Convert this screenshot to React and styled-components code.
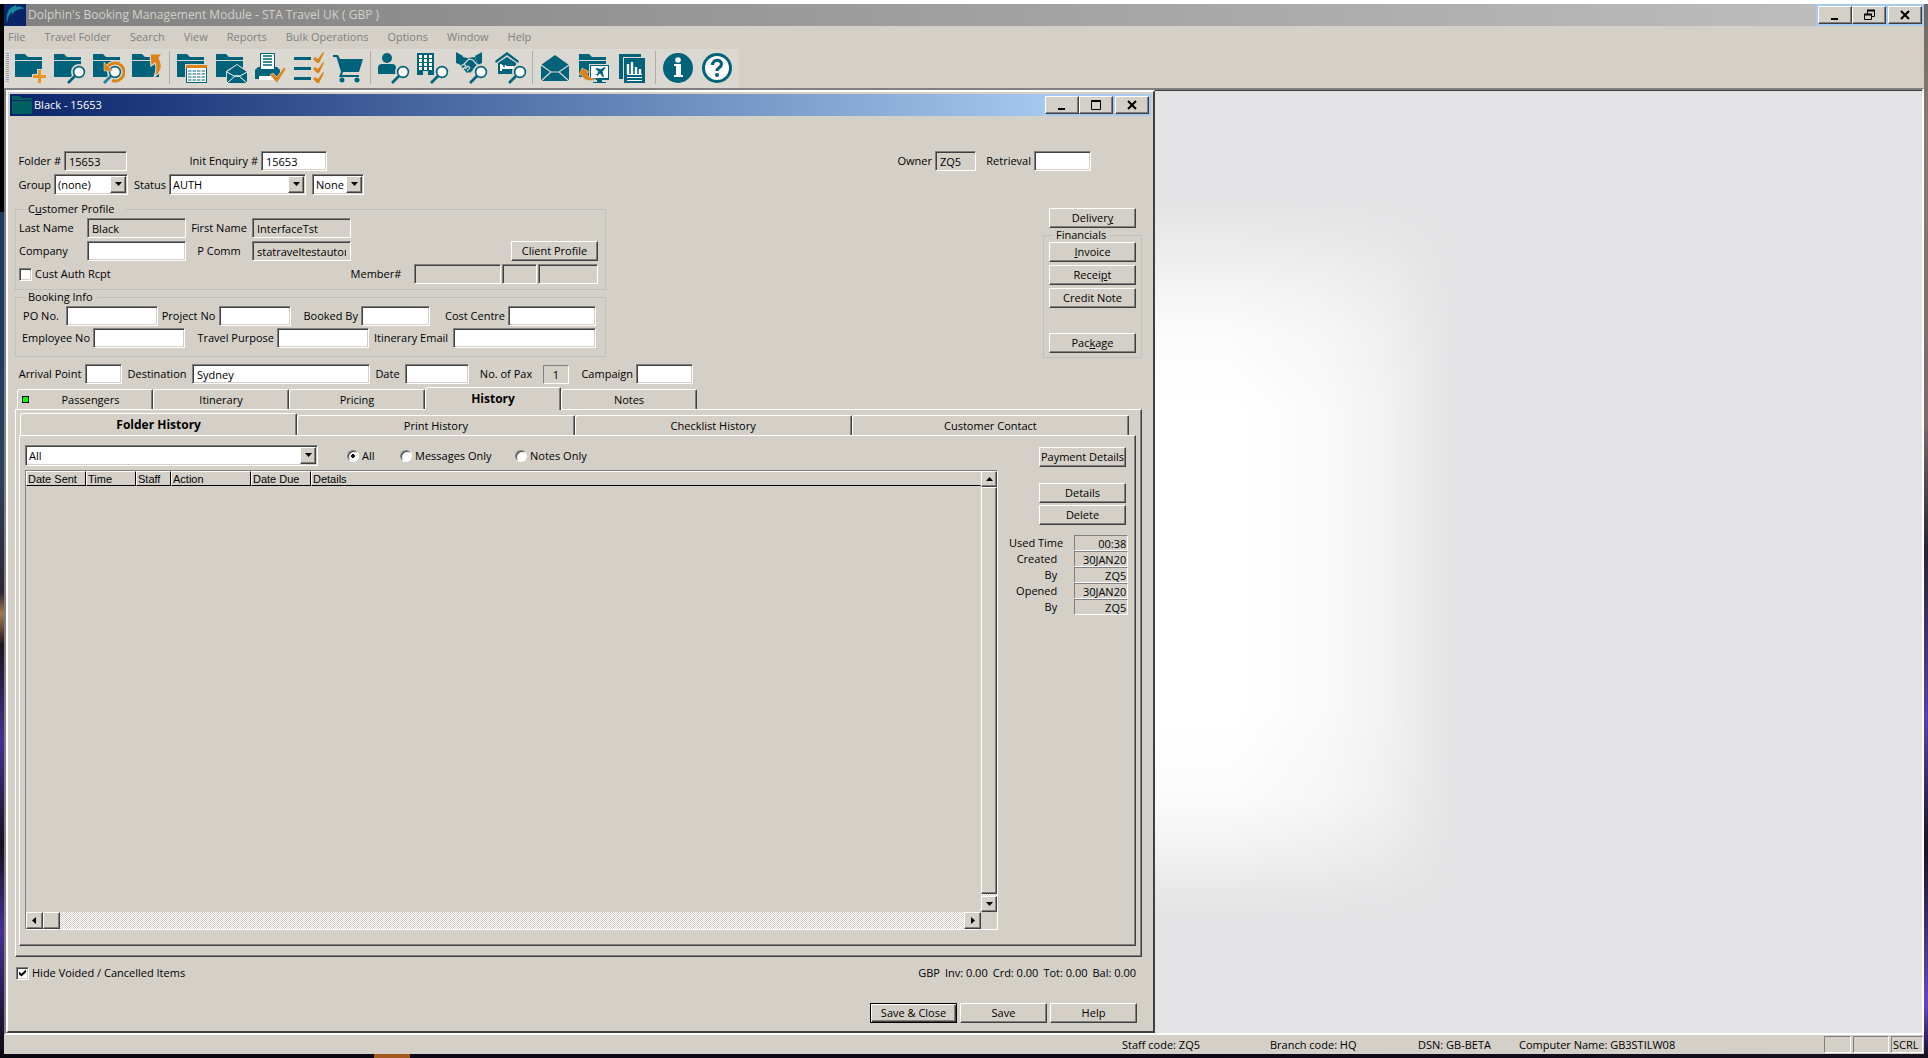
import React, { useState } from "react";
import styled, { createGlobalStyle, css } from "styled-components";

const FACE = "#d4d0c8";
const DARK = "#404040";
const SHADE = "#808080";
const TEAL = "#00637a";
const ORANGE = "#dc8318";
const LIGHT = "#dbd8d1";

const raised = css`
  border: 1px solid;
  border-color: #fff ${DARK} ${DARK} #fff;
  box-shadow: inset -1px -1px 0 ${SHADE};
`;

const sunken = css`
  border: 1px solid;
  border-color: ${SHADE} #fff #fff ${SHADE};
  box-shadow: inset 1px 1px 0 ${DARK}, inset -1px -1px 0 ${FACE};
`;

const GlobalStyle = createGlobalStyle`
  * { box-sizing: border-box; }
  body { margin: 0; background: #000; }
  body, button, input, select {
    font-family: "Open Sans", "Noto Sans", sans-serif;
    font-size: 11px;
    line-height: 14px;
    color: #000;
  }
`;

const Desktop = styled.div`
  height: 100vh;
  display: flex;
  padding: 0 4px 4px;
  background:
    linear-gradient(#fff, #fff) top / 100% 4px no-repeat,
    linear-gradient(90deg, #0a0810 0 374px, #a55a20 374px 410px, #0c0914 410px 60%, #14101e) bottom / 100% 4px no-repeat,
    linear-gradient(#000 0 20%, #1e3c60 20% 33%, #2d3f5c 45%, #2d2438 56%, #a07a50 58%, #1c1220 61%, #472f91 70%, #15101f 80%, #4a2e94 88%, #0c0914) left / 4px 100% no-repeat,
    linear-gradient(#6b6764, #8d7a6e 12%, #7c6a66 40%, #2b2236 52%, #5b3fb0 68%, #1a1424 80%, #6846c8 95%, #120c20) right / 4px 100% no-repeat;
`;

const AppWindow = styled.div`
  flex: 1;
  min-width: 0;
  margin-top: 4px;
  display: flex;
  flex-direction: column;
  background: ${FACE};
`;

const TitleBar = styled.header`
  flex: none;
  height: 22px;
  display: flex;
  align-items: center;
  color: ${(p) => (p.$active ? "#fff" : FACE)};
  background: ${(p) =>
    p.$active
      ? "linear-gradient(90deg, #0a246a, #a6caf0 92%)"
      : "linear-gradient(90deg, #808080, #c0c0c0)"};
`;

const TitleText = styled.h1`
  flex: 1;
  margin: 0;
  padding-left: 2px;
  font-size: ${(p) => (p.$large ? "12px" : "11px")};
  font-weight: 400;
  line-height: 22px;
  white-space: nowrap;
`;

const Controls = styled.div`
  height: 22px;
  display: flex;
  align-items: center;
  padding: 0 2px;
  background: #a6caf0;
`;

const ControlButton = styled.button`
  ${raised}
  width: 34px;
  height: 18px;
  padding: 0;
  display: grid;
  place-items: center;
  background: ${FACE};
  &:last-child { margin-left: 2px; }
`;

const MenuBar = styled.nav`
  flex: none;
  height: 23px;
  display: flex;
  align-items: center;
  gap: 1px;
  padding-bottom: 1px;
`;

const MenuItem = styled.button`
  border: 0;
  background: none;
  padding: 0 9px;
  color: ${SHADE};
  white-space: nowrap;
  &:first-child { padding-left: 4px; }
`;

const ToolBar = styled.div`
  flex: none;
  width: 735px;
  height: 39px;
  display: flex;
  align-items: center;
  padding: 0 0 2px 2px;
  background: ${LIGHT};
`;

const Grip = styled.div`
  width: 3px;
  height: 30px;
  margin-right: 4px;
  background: repeating-linear-gradient(#9a9cb4 0 1px, ${LIGHT} 1px 2px);
`;

const ToolButton = styled.button`
  width: 39px;
  height: 34px;
  padding: 0 0 0 2px;
  border: 0;
  background: none;
  display: flex;
  align-items: center;
  justify-content: flex-start;
`;

const Separator = styled.div`
  width: 1px;
  height: 33px;
  margin-right: 5px;
  background: #b0aca4;
`;

const Workspace = styled.main`
  flex: 1;
  min-height: 0;
  display: flex;
  border: solid;
  border-width: 2px;
  border-color: ${SHADE} #fff #fff ${SHADE};
  box-shadow: inset 0 1px 0 ${DARK};
  background: #e3e3e5;
  overflow: hidden;
`;

const Glow = styled.div`
  flex: 1;
  background: #fff;
  mask-image:
    linear-gradient(90deg, #000 80px, rgba(0, 0, 0, 0.8) 170px, rgba(0, 0, 0, 0.55) 230px, rgba(0, 0, 0, 0.25) 270px, transparent 305px),
    linear-gradient(transparent 105px, rgba(0, 0, 0, 0.25) 145px, rgba(0, 0, 0, 0.6) 195px, rgba(0, 0, 0, 0.85) 245px, #000 320px, #000 620px, rgba(0, 0, 0, 0.85) 710px, rgba(0, 0, 0, 0.5) 765px, rgba(0, 0, 0, 0.2) 800px, transparent 835px);
  mask-composite: intersect;
`;

const FolderWindow = styled.section`
  flex: 0 1 1149px;
  display: flex;
  flex-direction: column;
  padding: 2px;
  border: 2px solid;
  border-color: #fff ${DARK} ${DARK} #fff;
  background: ${FACE};
`;

const Body = styled.form`
  flex: 1;
  min-height: 0;
  display: flex;
  flex-direction: column;
  padding: 35px 9px 6px 5px;
`;

const Upper = styled.div`
  display: flex;
  justify-content: space-between;
`;

const LeftColumn = styled.div`
  width: 591px;
`;

const RightColumn = styled.div`
  width: 246px;
  display: flex;
  flex-direction: column;
  align-items: flex-end;
`;

const Row = styled.div`
  display: grid;
  grid-template-columns: ${(p) => p.$cols};
  align-items: center;
  width: 100%;
  min-height: 20px;
  margin-bottom: ${(p) => p.$after || "0"};
`;

const Label = styled.label`
  text-align: ${(p) => p.$align || "center"};
  padding: ${(p) => (p.$align === "right" ? "0 3px 0 0" : p.$align === "left" ? "0 0 0 3px" : "0")};
  white-space: nowrap;
`;

const Field = styled.input`
  ${sunken}
  width: 100%;
  min-width: 0;
  height: 20px;
  padding: 0 4px;
  border-radius: 0;
  outline: 0;
  background: ${(p) => (p.readOnly ? FACE : "#fff")};
`;

const FlatField = styled.input`
  width: 100%;
  min-width: 0;
  height: ${(p) => (p.$tall ? "19px" : "16px")};
  padding: 0 1px;
  border: 1px solid;
  border-color: ${SHADE} #fff #fff ${SHADE};
  outline: 0;
  background: ${FACE};
  text-align: ${(p) => (p.$tall ? "center" : "right")};
`;

const SelectBox = styled.span`
  ${sunken}
  position: relative;
  display: block;
  width: ${(p) => p.$width || "100%"};
  height: 21px;
  padding: 2px;
  background: #fff;
`;

const NativeSelect = styled.select`
  appearance: none;
  display: block;
  width: 100%;
  height: 15px;
  padding: 0 0 0 1px;
  border: 0;
  outline: 0;
  background: transparent;
`;

const Arrow = styled.span`
  ${raised}
  position: absolute;
  top: 1px;
  right: 1px;
  width: 16px;
  height: 17px;
  display: grid;
  place-items: center;
  background: ${FACE};
  pointer-events: none;
`;

const Group = styled.fieldset`
  margin: 0;
  min-width: 0;
  width: ${(p) => p.$width || "auto"};
  border: 1px solid #bfbfbf;
  padding: ${(p) => p.$pad};
`;

const Legend = styled.legend`
  margin-left: ${(p) => (p.$near ? "5px" : "10px")};
  padding: 0 ${(p) => (p.$wide ? "12px" : "4px")} 0 2px;
  height: 14px;
`;

const PushButton = styled.button`
  ${raised}
  width: 87px;
  height: 20px;
  padding: 0;
  background: ${FACE};
  text-align: center;
  white-space: nowrap;
  ${(p) =>
    p.$default &&
    css`
      border-color: #000;
      box-shadow: inset 1px 1px 0 #fff, inset -1px -1px 0 ${DARK}, inset -2px -2px 0 ${SHADE};
    `}
`;

const ButtonStack = styled.div`
  display: flex;
  flex-direction: column;
  gap: 3px;
  padding-right: ${(p) => p.$inset || "0"};
`;

const Gap = styled.div`
  height: ${(p) => p.$size};
`;

const CheckLine = styled.label`
  display: flex;
  align-items: center;
  gap: 3px;
  padding-left: ${(p) => p.$indent || "0"};
  white-space: nowrap;
`;

const CheckBox = styled.input`
  ${sunken}
  appearance: none;
  flex: none;
  width: 13px;
  height: 13px;
  margin: 0;
  background: #fff;
  &:checked::before {
    content: "";
    display: block;
    width: 7px;
    height: 7px;
    margin: 2px;
    background: #000;
    clip-path: polygon(0 30%, 35% 60%, 100% 0, 100% 40%, 35% 100%, 0 70%);
  }
`;

const Radio = styled.input`
  appearance: none;
  flex: none;
  width: 12px;
  height: 12px;
  margin: 0;
  border: 1px solid;
  border-color: ${SHADE} #fff #fff ${SHADE};
  border-radius: 50%;
  background: #fff;
  box-shadow: inset 1px 1px 0 ${DARK};
  &:checked {
    background: radial-gradient(circle, #000 0 2px, #fff 2px);
  }
`;

const TabList = styled.div`
  flex: none;
  display: flex;
  align-items: flex-end;
  height: 22px;
  padding: ${(p) => p.$pad || "0"};
  position: relative;
  z-index: 1;
`;

const Tab = styled.button`
  flex: ${(p) => (p.$fill ? "1 1 0" : "none")};
  width: ${(p) => (p.$fill ? "auto" : "136px")};
  height: 20px;
  padding: 0;
  display: flex;
  align-items: center;
  border: solid;
  border-width: 1px 1px 0 1px;
  border-color: #fff ${DARK} #fff #fff;
  border-radius: 3px 2px 0 0;
  box-shadow: inset -1px 0 0 ${SHADE};
  background: ${FACE};
  ${(p) =>
    p["aria-selected"] &&
    css`
      height: ${p.$fill ? "22px" : "23px"};
      margin-bottom: ${p.$fill ? "0" : "-1px"};
      font-weight: 700;
      font-size: 12px;
    `}
`;

const TabText = styled.span`
  flex: 1;
  text-align: center;
`;

const Marker = styled.span`
  width: 7px;
  height: 7px;
  margin-left: 4px;
  border: 1px solid #000;
  background: #0f0;
`;

const Panel = styled.div`
  flex: 1;
  min-height: 0;
  display: flex;
  flex-direction: column;
  border: 1px solid;
  border-color: #fff ${DARK} ${DARK} #fff;
  box-shadow: inset -1px -1px 0 ${SHADE};
  padding: ${(p) => p.$pad};
`;

const HistoryLayout = styled.div`
  flex: 1;
  min-height: 0;
  display: grid;
  grid-template-columns: 1fr 117px;
  gap: 11px;
`;

const HistoryMain = styled.div`
  display: flex;
  flex-direction: column;
  gap: 4px;
  min-height: 0;
`;

const Filters = styled.div`
  display: grid;
  grid-template-columns: 322px 53px 115px auto;
  align-items: center;
`;

const ListView = styled.div`
  flex: 1;
  min-height: 0;
  display: grid;
  grid-template-columns: 1fr 16px;
  grid-template-rows: 1fr 17px;
  border: 1px solid;
  border-color: ${SHADE} #fff #fff ${SHADE};
`;

const Table = styled.table`
  width: 100%;
  table-layout: fixed;
  border-collapse: separate;
  border-spacing: 0;
  align-self: start;
`;

const Th = styled.th`
  width: ${(p) => p.$width};
  height: 15px;
  padding: 0 0 0 1px;
  border: 1px solid;
  border-color: #fff ${(p) => (p.$width ? "#000" : FACE)} #000 #fff;
  font: 11px/12px "Liberation Sans", Arial, sans-serif;
  text-align: left;
`;

const ScrollBar = styled.div`
  display: flex;
  flex-direction: ${(p) => (p.$vertical ? "column" : "row")};
  background: repeating-conic-gradient(#fff 0 25%, ${FACE} 0 50%) 0 0 / 2px 2px;
`;

const ScrollButton = styled.button`
  ${raised}
  flex: none;
  width: ${(p) => (p.$vertical ? "16px" : "17px")};
  height: ${(p) => (p.$vertical ? "16px" : "17px")};
  padding: 0;
  display: grid;
  place-items: center;
  background: ${FACE};
`;

const Thumb = styled.div`
  ${raised}
  flex: ${(p) => (p.$vertical ? "1" : "0 0 17px")};
  margin-bottom: ${(p) => (p.$vertical ? "2px" : "0")};
  background: ${FACE};
`;

const Spring = styled.div`
  flex: 1;
`;

const Side = styled.aside`
  display: flex;
  flex-direction: column;
  align-items: flex-end;
  padding-top: 2px;
`;

const Facts = styled.div`
  width: 100%;
  display: grid;
  grid-template-columns: 1fr 54px;
`;

const FactLabel = styled.label`
  text-align: right;
  padding-right: ${(p) => (p.$wide ? "11px" : "17px")};
  line-height: 16px;
  white-space: nowrap;
`;

const Footer = styled.footer`
  flex: none;
  display: flex;
  justify-content: space-between;
  padding: 9px 6px 23px 1px;
`;

const Totals = styled.div`
  display: flex;
  gap: 5px;
`;

const Actions = styled.div`
  flex: none;
  display: flex;
  justify-content: flex-end;
  gap: 3px;
  padding-right: 5px;
`;

const StatusBar = styled.footer`
  flex: none;
  height: 19px;
  display: grid;
  grid-template-columns: 1fr 148px 148px 101px 303px 29px 38px 34px;
  align-items: center;
  padding: 1px 1px 1px 0;
  white-space: nowrap;
`;

const StatusCell = styled.span`
  grid-column: ${(p) => p.$col || "auto"};
`;

const StatusBox = styled.span`
  height: 17px;
  margin-left: 2px;
  padding-left: 1px;
  border: 1px solid;
  border-color: ${SHADE} #fff #fff ${SHADE};
  line-height: 15px;
`;

/* ---------- icons ---------- */

const Svg = ({ children }) => (
  <svg width="32" height="32" viewBox="0 0 32 32" fill={TEAL} aria-hidden="true">{children}</svg>
);
const FolderShape = () => <path d="M0 2h10l3 3h14v3H0zM0 9h27v16H0z" />;
const Lens = ({ x = 25, y = 20, handle = TEAL }) => (
  <g transform={`translate(${x - 25} ${y - 20})`} fill="none">
    <path d="M21 24l-7 7" stroke={LIGHT} strokeWidth="5" />
    <circle cx="25" cy="20" r="6" stroke={LIGHT} strokeWidth="4" />
    <path d="M21 24l-7 7" stroke={handle} strokeWidth="2.6" />
    <circle cx="25" cy="20" r="5.4" fill="#fff" stroke={TEAL} strokeWidth="1.6" />
  </g>
);

const icons = {
  newFolder: <Svg><FolderShape /><path d="M22 17h5v5h5v5h-5v5h-5v-5h-5v-5h5z" fill={LIGHT} /><path d="M23 18h3v5h5v3h-5v5h-3v-5h-5v-3h5z" fill="#e6951f" /></Svg>,
  findFolder: <Svg><FolderShape /><Lens /></Svg>,
  refreshFolder: (
    <Svg><FolderShape /><Lens x={22} handle="#1a7fa0" />
      <path d="M14 16A9 9 0 1 1 19 28.500" fill="none" stroke={LIGHT} strokeWidth="5" />
      <path d="M14 16A9 9 0 1 1 19 28.500" fill="none" stroke={ORANGE} strokeWidth="3" />
      <path d="M11 10v9h9z" fill={ORANGE} stroke={LIGHT} strokeWidth=".6" />
    </Svg>
  ),
  moveFolder: (
    <Svg><FolderShape />
      <path d="M18 2h12l-3 4c4 7 3 14-5 19 2-5 3-9 1-14l-4 3z" fill={ORANGE} stroke={LIGHT} strokeWidth="1.200" />
    </Svg>
  ),
  folderTable: (
    <Svg><FolderShape /><path d="M8 12h23v20H8z" fill={LIGHT} /><path d="M9 15h21v16H9z" /><path d="M10 16h19v14H10z" fill="#fff" />
      <path d="M9 13h21v3H9z" fill={ORANGE} />
      <path d="M11 19h17M11 22h17M11 25h17M11 28h17" stroke={TEAL} strokeWidth="1.200" strokeDasharray="3.500 1" />
    </Svg>
  ),
  folderMail: (
    <Svg><FolderShape /><path d="M10 19l11-7 11 7v13H10z" fill={LIGHT} /><path d="M11 20l10-7 10 7v11H11z" />
      <path d="M11 20l7 4h6l7-4M11 31l8-7h4l8 7" fill="none" stroke="#fff" strokeWidth="1" />
    </Svg>
  ),
  print: (
    <Svg><path d="M0 18l3-3h19l3 3v9H0z" /><path d="M5 1h15v17H5z" /><path d="M6 2h13v15H6z" fill="#fff" />
      <path d="M8 4h9M8 7h9M8 10h9M8 13h9" stroke={TEAL} strokeWidth="1.300" /><path d="M4 24h14v4H4z" fill="#fff" />
      <path d="M15 23l3-2 4 4 7-10 2 2-9 14z" fill={ORANGE} stroke={LIGHT} strokeWidth=".7" />
    </Svg>
  ),
  checklist: (
    <Svg><path d="M0 5h17v3H0zM0 15h17v3H0zM0 25h17v3H0z" />
      {[0, 10, 20].map((y) => <path key={y} transform={`translate(0 ${y})`} d="M19 7l2-2 3 2 5-7 1 1-5 10h-2z" fill={ORANGE} />)}
    </Svg>
  ),
  cart: <Svg><path d="M0 3h5l2 4h23l-4 13H10l-1 3h17v2H6l2-5L3.500 5H0z" /><circle cx="9" cy="28" r="2.500" /><circle cx="24" cy="28" r="2.500" /></Svg>,
  person: <Svg><circle cx="9" cy="6" r="5" /><path d="M0 22v-6q0-4 4-4h10q4 0 4 4v6z" /><Lens /></Svg>,
  building: (
    <Svg><path d="M0 1h17v22h-6v-4H6v4H0z" />
      {[3, 7, 11, 15].map((y) => [2, 7, 12].map((x) => <rect key={`${x}-${y}`} x={x} y={y} width="3" height="3" fill="#fff" />))}
      <Lens />
    </Svg>
  ),
  handshake: (
    <Svg><path d="M0 0l7 4-2 9-5-2zM26 0l-7 4 3 9 4-2z" /><path d="M6 5l6 1 7-1 3 8-7 6-4 2-7-8z" />
      <path d="M8 12l5-5 4 1 6 7M5 14l3-2 2 2-3 3M9 17l3-3 2 2-3 3" fill="none" stroke={LIGHT} strokeWidth="1.200" />
      <path d="M12 19l3-3 2 2-3 3z" /><Lens />
    </Svg>
  ),
  hotel: (
    <Svg><path d="M0 9L12 0l12 9-1 2L12 3 1 11z" /><path d="M3 11l9-6 9 6v11H3z" /><path d="M5 12v7h2v-2h11v2h1v-5h-8v-1H7v-1z" fill="#fff" /><circle cx="9" cy="14" r="1" fill={TEAL} /><Lens /></Svg>
  ),
  mail: <Svg><path d="M1 13L15 3l14 10v16H1z" /><path d="M1 13l10 7h8l10-7M1 29l10-9m8 0l10 9" fill="none" stroke={LIGHT} strokeWidth="1.200" /></Svg>,
  travel: (
    <Svg><FolderShape /><path d="M10 12h21v16H10z" fill={LIGHT} /><path d="M11 13h19v15H11zM18 28h5v2h4v1H14v-1h4z" /><path d="M12 14h17v12H12z" fill="#fff" />
      <path d="M25.500 15l1 1-3 3.500 1.500 5-1 .8-3-3.800-2 1.500v2l-1-2-2-1h2l1.500-2.500-3-2.500 1-1 4.500 1.200z" />
      <path d="M0 23l3-7 8 4-3 1c1 4 5 6 9 6-5 3-13 2-14-4z" fill={ORANGE} stroke={LIGHT} strokeWidth=".5" />
    </Svg>
  ),
  report: (
    <Svg><path d="M1 2h22v3H5v22H1z" /><path d="M6 6h21v25H6z" /><path d="M10 12v10M14 10v12M18 15v7M22 17v5" stroke="#fff" strokeWidth="2.400" fill="none" /><path d="M9 22.500h15M9 25.500h15M9 28.500h15" stroke="#fff" strokeWidth="1.200" /></Svg>
  ),
  info: <Svg><circle cx="15" cy="16" r="15" /><circle cx="15" cy="8" r="2.800" fill="#fff" /><path d="M11 12h7v11h2v2h-9v-2h2v-9h-2z" fill="#fff" /></Svg>,
  help: (
    <Svg><circle cx="15" cy="16" r="15" /><circle cx="15" cy="16" r="12" fill="#fff" />
      <path d="M10.500 13c0-6 9-6 9-1 0 4-4.500 3.500-4.500 7" fill="none" stroke={TEAL} strokeWidth="3.200" /><circle cx="15" cy="23" r="2" />
    </Svg>
  ),
};

const toolGroups = [
  [["New folder", "newFolder"], ["Find folder", "findFolder"], ["Recent folders", "refreshFolder"], ["Move folder", "moveFolder"]],
  [["Folder list", "folderTable"], ["Folder mail", "folderMail"], ["Print", "print"], ["Checklist", "checklist"], ["Cart", "cart"]],
  [["Find client", "person"], ["Find company", "building"], ["Find supplier", "handshake"], ["Find hotel", "hotel"]],
  [["Mail", "mail"], ["Import booking", "travel"], ["Reports", "report"]],
  [["Information", "info"], ["Help", "help"]],
];

const Dolphin = () => (
  <svg width="22" height="22" viewBox="0 0 22 22" aria-hidden="true">
    <path d="M0 0h22v22H0z" fill="#0a246a" />
    <path d="M3 20C2 12 3 6 8 3l4-2v2c4-1 7 0 8 2-4-1-7 1-10 3l-2 3v-3c-3 2-4 6-5 12z" fill="#138a9c" />
  </svg>
);

const SmallFolder = () => (
  <svg width="22" height="22" viewBox="0 0 22 22" fill="#006060" aria-hidden="true">
    <path d="M2 2h8l2 2h10v2H2zM2 7h20v13H2z" />
  </svg>
);

const Triangle = ({ dir = "down" }) => {
  const points = { down: "0,1 7,1 3.5,5", up: "0,5 7,5 3.5,1", left: "5,0 5,7 1,3.5", right: "2,0 2,7 6,3.5" };
  return <svg width="7" height="7" viewBox="0 0 7 7" aria-hidden="true"><polygon points={points[dir]} /></svg>;
};

const Glyph = ({ kind }) => (
  <svg width="14" height="12" viewBox="0 0 14 12" fill="none" stroke="#000" aria-hidden="true">
    {kind === "Minimize" && <path d="M3 10h7" strokeWidth="2" />}
    {kind === "Maximize" && <><path d="M2 2h10" strokeWidth="2" /><path d="M2.500 2v8.500h9V2" /></>}
    {kind === "Restore" && <><path d="M5 1.500h8M2 5.500h8" strokeWidth="2" /><path d="M5.500 2v3M12.500 2v5.500H10M2.500 5v5.500h7V5" /></>}
    {kind === "Close" && <path d="M3 2l8 8M11 2l-8 8" strokeWidth="2" />}
  </svg>
);

const WindowControls = ({ middle }) => (
  <Controls>
    {["Minimize", middle, "Close"].map((k) => (
      <ControlButton key={k} type="button" aria-label={k}><Glyph kind={k} /></ControlButton>
    ))}
  </Controls>
);

/* ---------- form helpers ---------- */

const Labelled = ({ id, label, align, value = "", locked }) => (
  <>
    <Label htmlFor={id} $align={align}>{label}</Label>
    <Field id={id} defaultValue={value} readOnly={locked} />
  </>
);

const Dropdown = ({ id, value, width, title }) => (
  <SelectBox $width={width}>
    <NativeSelect id={id} aria-label={title} defaultValue={value}><option>{value}</option></NativeSelect>
    <Arrow><Triangle /></Arrow>
  </SelectBox>
);

const menus = ["File", "Travel Folder", "Search", "View", "Reports", "Bulk Operations", "Options", "Window", "Help"];
const tabs = ["Passengers", "Itinerary", "Pricing", "History", "Notes"];
const historyTabs = ["Folder History", "Print History", "Checklist History", "Customer Contact"];
const columns = [["Date Sent", "60px"], ["Time", "50px"], ["Staff", "35px"], ["Action", "80px"], ["Date Due", "60px"], ["Details"]];
const facts = [["Used Time", "00:38"], ["Created", "30JAN20"], ["By", "ZQ5"], ["Opened", "30JAN20"], ["By", "ZQ5"]];

export default function App() {
  const [tab, setTab] = useState("History");
  const [subTab, setSubTab] = useState("Folder History");

  return (
    <Desktop>
      <GlobalStyle />
      <AppWindow>
        <TitleBar>
          <Dolphin />
          <TitleText $large>Dolphin's Booking Management Module - STA Travel UK ( GBP )</TitleText>
          <WindowControls middle="Restore" />
        </TitleBar>
        <MenuBar>
          {menus.map((m) => (
            <MenuItem key={m} type="button">{m}</MenuItem>
          ))}
        </MenuBar>
        <ToolBar role="toolbar">
          <Grip />
          {toolGroups.map((group, i) => (
            <React.Fragment key={i}>
              {i > 0 && <Separator />}
              {group.map(([name, icon]) => (
                <ToolButton key={name} type="button" aria-label={name}>{icons[icon]}</ToolButton>
              ))}
            </React.Fragment>
          ))}
        </ToolBar>

        <Workspace>
          <FolderWindow>
            <TitleBar $active>
              <SmallFolder />
              <TitleText>Black - 15653</TitleText>
              <WindowControls middle="Maximize" />
            </TitleBar>
            <Body onSubmit={(e) => e.preventDefault()}>
              <Upper>
                <LeftColumn>
                  <Row $cols="49px 63px 134px 66px" $after="3px">
                    <Labelled id="folder" label="Folder #" align="right" value="15653" locked />
                    <Labelled id="enquiry" label="Init Enquiry #" align="right" value="15653" />
                  </Row>
                  <Row $cols="39px 74px 41px 137px 6px 52px" $after="7px">
                    <Label htmlFor="group" $align="right">Group</Label>
                    <Dropdown id="group" value="(none)" />
                    <Label htmlFor="status" $align="right">Status</Label>
                    <Dropdown id="status" value="AUTH" />
                    <span />
                    <Dropdown id="substatus" value="None" title="Secondary status" />
                  </Row>

                  <Group $pad="2px 7px 5px 0">
                    <Legend $wide>C<u>u</u>stomer Profile</Legend>
                    <Row $cols="71px 99px 66px 99px" $after="3px">
                      <Labelled id="last" label="Last Name" align="left" value="Black" locked />
                      <Labelled id="first" label="First Name" value="InterfaceTst" locked />
                    </Row>
                    <Row $cols="71px 99px 66px 99px 1fr 87px" $after="3px">
                      <Labelled id="company" label="Company" align="left" />
                      <Labelled id="pcomm" label="P Comm" value="statraveltestautomation" locked />
                      <span />
                      <PushButton type="button">Client Profile</PushButton>
                    </Row>
                    <Row $cols="1fr 76px 87px 1px 35px 1px 60px">
                      <CheckLine $indent="3px"><CheckBox type="checkbox" />Cust Auth Rcpt</CheckLine>
                      <Labelled id="member" label="Member#" locked />
                      <span />
                      <Field readOnly aria-label="Member type" />
                      <span />
                      <Field readOnly aria-label="Member level" />
                    </Row>
                  </Group>

                  <Group $pad="2px 9px 8px 0">
                    <Legend>Booking Info</Legend>
                    <Row $cols="50px 92px 61px 72px 70px 69px 78px 88px" $after="2px">
                      <Labelled id="po" label="PO No." />
                      <Labelled id="project" label="Project No" />
                      <Labelled id="booked" label="Booked By" align="right" />
                      <Labelled id="cost" label="Cost Centre" align="right" />
                    </Row>
                    <Row $cols="77px 92px 92px 92px 84px 143px">
                      <Labelled id="employee" label="Employee No" align="right" />
                      <Labelled id="purpose" label="Travel Purpose" align="right" />
                      <Labelled id="email" label="Itinerary Email" />
                    </Row>
                  </Group>
                </LeftColumn>

                <RightColumn>
                  <Row $cols="39px 41px 58px 57px" $after="37px">
                    <Labelled id="owner" label="Owner" align="right" value="ZQ5" locked />
                    <Labelled id="retrieval" label="Retrieval" align="right" />
                  </Row>
                  <ButtonStack $inset="6px">
                    <PushButton type="button">Deliver<u>y</u></PushButton>
                  </ButtonStack>
                  <Group $width="99px" $pad="0 5px 4px">
                    <Legend $near>Financials</Legend>
                    <ButtonStack>
                      <PushButton type="button"><u>I</u>nvoice</PushButton>
                      <PushButton type="button">Recei<u>p</u>t</PushButton>
                      <PushButton type="button">Credit Note</PushButton>
                      <Gap $size="19px" />
                      <PushButton type="button">Pac<u>k</u>age</PushButton>
                    </ButtonStack>
                  </Group>
                </RightColumn>
              </Upper>

              <Gap $size="6px" />
              <Row $cols="70px 37px 70px 178px 35px 64px 74px 26px 67px 57px" $after="3px">
                <Labelled id="arrival" label="Arrival Point" />
                <Labelled id="destination" label="Destination" value="Sydney" />
                <Labelled id="date" label="Date" />
                <Label htmlFor="pax">No. of Pax</Label>
                <FlatField id="pax" readOnly $tall defaultValue="1" />
                <Labelled id="campaign" label="Campaign" align="right" />
              </Row>

              <TabList role="tablist" $pad="0 0 0 2px">
                {tabs.map((t) => (
                  <Tab key={t} type="button" role="tab" aria-selected={tab === t} onClick={() => setTab(t)}>
                    {t === "Passengers" && <Marker />}
                    <TabText>{t}</TabText>
                  </Tab>
                ))}
              </TabList>
              <Panel $pad="3px 5px 10px 3px">
                <TabList role="tablist" $pad="0 7px 0 1px">
                  {historyTabs.map((t) => (
                    <Tab key={t} $fill type="button" role="tab" aria-selected={subTab === t} onClick={() => setSubTab(t)}>
                      <TabText>{t}</TabText>
                    </Tab>
                  ))}
                </TabList>
                <Panel $pad="9px 9px 15px 5px">
                  <HistoryLayout>
                    <HistoryMain>
                      <Filters>
                        <Dropdown id="filter" value="All" width="293px" title="Filter" />
                        <CheckLine><Radio type="radio" name="show" defaultChecked />All</CheckLine>
                        <CheckLine><Radio type="radio" name="show" />Messages Only</CheckLine>
                        <CheckLine><Radio type="radio" name="show" />Notes Only</CheckLine>
                      </Filters>
                      <ListView>
                        <Table>
                          <thead>
                            <tr>{columns.map(([name, w]) => <Th key={name} $width={w}>{name}</Th>)}</tr>
                          </thead>
                        </Table>
                        <ScrollBar $vertical>
                          <ScrollButton $vertical type="button" aria-label="Scroll up"><Triangle dir="up" /></ScrollButton>
                          <Thumb $vertical />
                          <ScrollButton $vertical type="button" aria-label="Scroll down"><Triangle /></ScrollButton>
                        </ScrollBar>
                        <ScrollBar>
                          <ScrollButton type="button" aria-label="Scroll left"><Triangle dir="left" /></ScrollButton>
                          <Thumb />
                          <Spring />
                          <ScrollButton type="button" aria-label="Scroll right"><Triangle dir="right" /></ScrollButton>
                        </ScrollBar>
                      </ListView>
                    </HistoryMain>
                    <Side>
                      <PushButton type="button">Payment Details</PushButton>
                      <Gap $size="16px" />
                      <PushButton type="button">Details</PushButton>
                      <Gap $size="2px" />
                      <PushButton type="button">Delete</PushButton>
                      <Gap $size="10px" />
                      <Facts>
                        {facts.map(([name, value], i) => (
                          <React.Fragment key={i}>
                            <FactLabel htmlFor={`fact${i}`} $wide={i === 0}>{name}</FactLabel>
                            <FlatField id={`fact${i}`} readOnly defaultValue={value} />
                          </React.Fragment>
                        ))}
                      </Facts>
                    </Side>
                  </HistoryLayout>
                </Panel>
              </Panel>

              <Footer>
                <CheckLine><CheckBox type="checkbox" defaultChecked />Hide Voided / Cancelled Items</CheckLine>
                <Totals>
                  <span>GBP</span><span>Inv: 0.00</span><span>Crd: 0.00</span><span>Tot: 0.00</span><span>Bal: 0.00</span>
                </Totals>
              </Footer>
              <Actions>
                <PushButton $default type="submit">Save &amp; Close</PushButton>
                <PushButton type="button">Save</PushButton>
                <PushButton type="button">Help</PushButton>
              </Actions>
            </Body>
          </FolderWindow>
          <Glow />
        </Workspace>

        <StatusBar>
          <StatusCell $col="2">Staff code: ZQ5</StatusCell>
          <StatusCell>Branch code: HQ</StatusCell>
          <StatusCell>DSN: GB-BETA</StatusCell>
          <StatusCell>Computer Name: GB3STILW08</StatusCell>
          <StatusBox />
          <StatusBox />
          <StatusBox>SCRL</StatusBox>
        </StatusBar>
      </AppWindow>
    </Desktop>
  );
}
